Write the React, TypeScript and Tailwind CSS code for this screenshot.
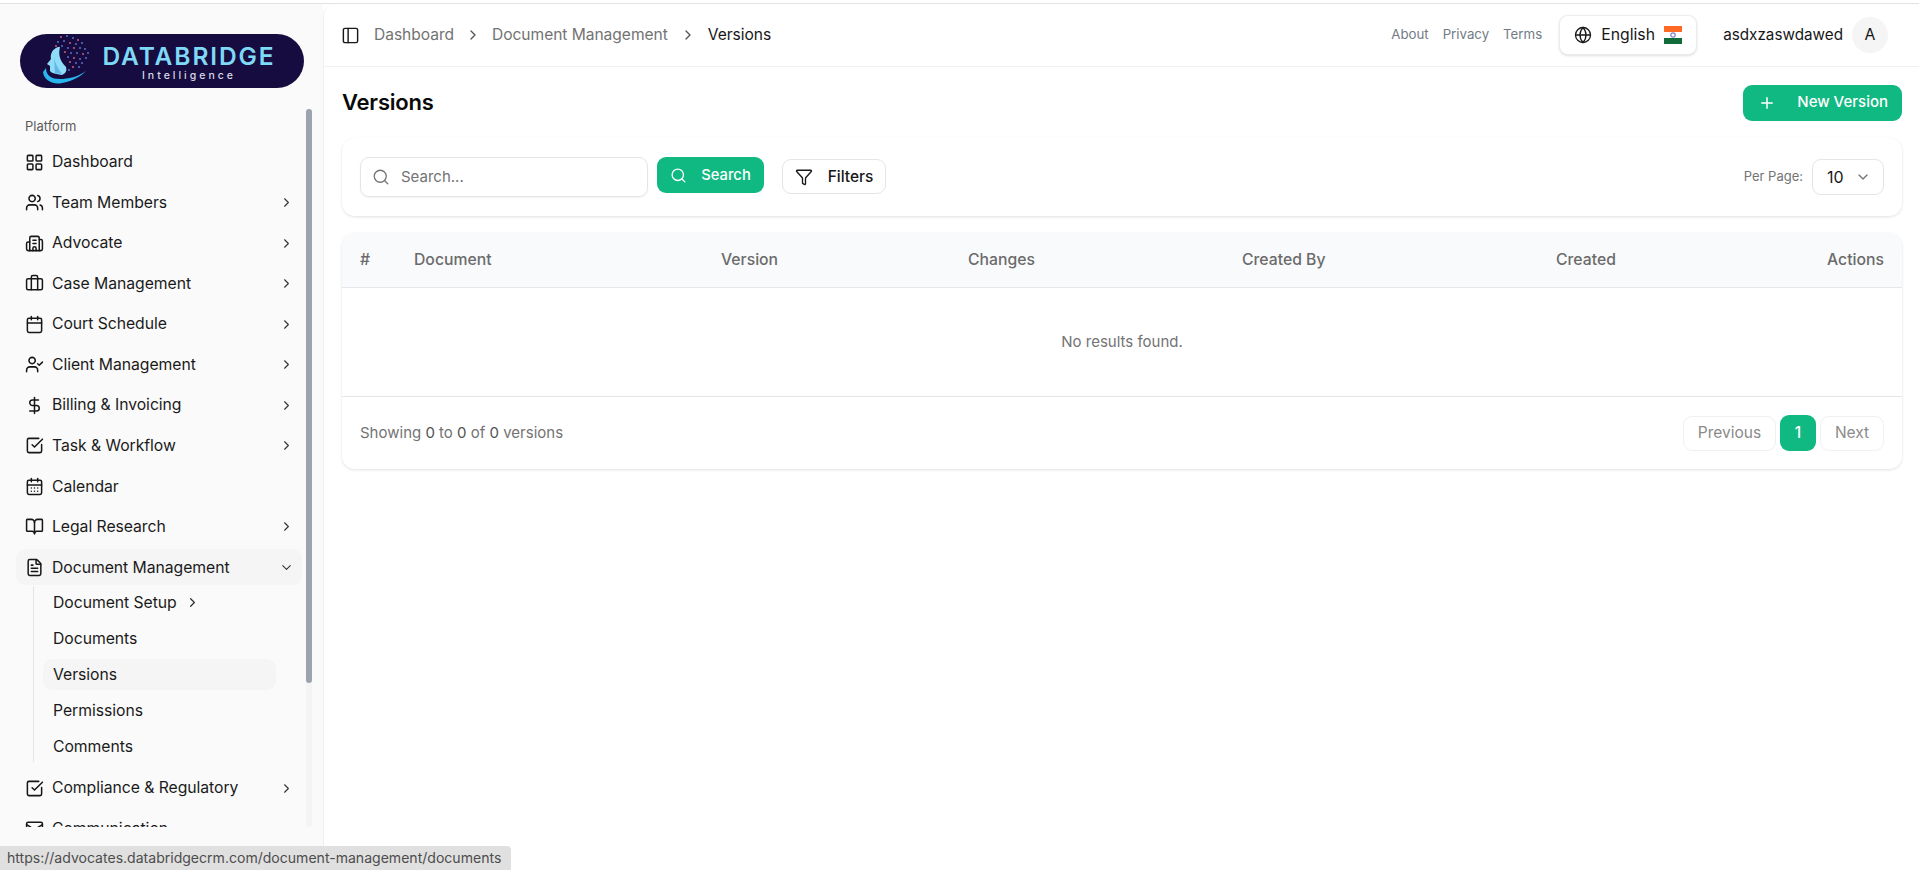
import React from "react";
import {
  LayoutGrid, Users, Building2, Briefcase, Calendar, UserCheck, DollarSign, SquareCheckBig, CalendarDays,
  BookOpen, FileText, Mail, ChevronRight, ChevronDown, PanelLeft, Globe, Search, Funnel, Plus,
} from "lucide-react";

const font = "font-['Inter','Liberation_Sans',sans-serif]";

type Item = { label: string; icon: React.ComponentType<{ className?: string; strokeWidth?: number }>; arrow?: boolean; open?: boolean };

const before: Item[] = [
  { label: "Dashboard", icon: LayoutGrid },
  { label: "Team Members", icon: Users, arrow: true },
  { label: "Advocate", icon: Building2, arrow: true },
  { label: "Case Management", icon: Briefcase, arrow: true },
  { label: "Court Schedule", icon: Calendar, arrow: true },
  { label: "Client Management", icon: UserCheck, arrow: true },
  { label: "Billing & Invoicing", icon: DollarSign, arrow: true },
  { label: "Task & Workflow", icon: SquareCheckBig, arrow: true },
  { label: "Calendar", icon: CalendarDays },
  { label: "Legal Research", icon: BookOpen, arrow: true },
  { label: "Document Management", icon: FileText, open: true },
];
const after: Item[] = [
  { label: "Compliance & Regulatory", icon: SquareCheckBig, arrow: true },
  { label: "Communication", icon: Mail },
];

function Row({ item }: { item: Item }) {
  const Icon = item.icon;
  return (
    <div className={`flex h-9 shrink-0 items-center gap-[8px] rounded-[9px] pl-[9px] pr-[8px] ${item.open ? "bg-[#f5f5f5]" : ""}`}>
      <Icon className="size-[19px] shrink-0 text-[#171717]" strokeWidth={1.9} />
      <span className="flex-1 whitespace-nowrap text-[15.75px] tracking-[-0.05px] text-[#1a1a1a]">{item.label}</span>
      {item.arrow && <ChevronRight className="size-[15px] text-[#333]" strokeWidth={1.8} />}
      {item.open && <ChevronDown className="size-[15px] text-[#333]" strokeWidth={1.8} />}
    </div>
  );
}

function Logo() {
  const dots = [
    [21, 2], [27, 1], [33, 3], [38, 5], [18, 7], [24, 6], [30, 8], [36, 9], [42, 8], [16, 11],
    [22, 11], [28, 13], [34, 13], [40, 13], [45, 14], [25, 17], [31, 18], [37, 18], [43, 19], [48, 18],
    [28, 22], [34, 23], [40, 24], [46, 23], [30, 27], [36, 28], [42, 28], [33, 32], [39, 32], [29, 35],
  ];
  return (
    <div className="flex h-[54px] w-[284px] items-center rounded-[27px] bg-[#160c40] pl-[20px]">
      <svg viewBox="0 0 58 52" className="h-[52px] w-[58px] shrink-0">
        {dots.map(([x, y], i) => (
          <circle key={i} cx={x} cy={y} r="0.9" fill={i % 3 === 0 ? "#e0648c" : "#5f7fd8"} />
        ))}
        <path d="M18 12 C12 14 10 20 11 24 L7 29 L10 31 L10 36 C12 39 18 39 22 40 C26 38 27 36 26 32 C20 26 18 20 20 12 Z" fill="#8fdcf8" />
        <path d="M14 20 C14 26 17 32 22 39 L15 38 Z" fill="#4aa6e0" opacity="0.7" />
        <path d="M3 37 C4 46 14 50 22 48 C32 46 40 42 46 36 C38 42 28 44 20 44 C12 44 6 41 6 33 Z" fill="#29b6ec" />
      </svg>
      <div className="ml-[2px] flex w-[178px] flex-col items-center pt-[4px]">
        <span className="whitespace-nowrap text-[24.5px] font-semibold leading-[25px] tracking-[1.9px] text-[#7fd8f6]">DATABRIDGE</span>
        <span className="text-[10.5px] font-medium leading-[13px] tracking-[3px] text-[#d9d9e6]">Intelligence</span>
      </div>
    </div>
  );
}

function Sidebar() {
  return (
    <aside className="relative flex w-[323px] shrink-0 flex-col bg-[#fafafa]">
      <div className="px-5 pt-[30px]"><Logo /></div>
      <div className="relative mt-[21px] h-[718px] w-[312px] overflow-hidden pl-4 pr-[10px]">
        <div className="flex h-[35px] items-center pl-[9px] pt-[1px] text-[13px] text-[#5a5a5a]">Platform</div>
        <div className="flex flex-col gap-[4.55px]">
          {before.map((i) => <Row key={i.label} item={i} />)}
          <div className="-mt-[4px] mb-[3.5px] ml-[17px] flex flex-col gap-[5px] border-l border-[#e5e5e5] pl-[9px] pr-[26px] pt-[1px]">
            <div className="flex h-[31px] items-center gap-[8px] px-[10px] text-[15.75px] tracking-[-0.05px] text-[#1a1a1a]">
              Document Setup <ChevronRight className="size-[15px] text-[#333]" />
            </div>
            {["Documents", "Versions", "Permissions", "Comments"].map((s) => (
              <div key={s} className={`flex h-[31px] items-center rounded-[9px] px-[10px] text-[15.75px] tracking-[-0.05px] text-[#1a1a1a] ${s === "Versions" ? "bg-[#f5f5f5]" : ""}`}>{s}</div>
            ))}
          </div>
          {after.map((i) => <Row key={i.label} item={i} />)}
        </div>
        <div className="absolute bottom-0 right-0 top-0 w-[6px] rounded-full bg-[#f4f4f5]">
          <div className="h-[574px] w-[6px] rounded-full bg-[#9ca3af]" />
        </div>
      </div>
    </aside>
  );
}

function Header() {
  return (
    <header className="flex h-[63px] items-center border-b border-[#f0f0f0] pl-[17px] pr-[31px]">
      <PanelLeft className="size-[19px] text-[#171717]" strokeWidth={1.8} />
      <nav className="ml-[14px] flex items-center text-[15.6px] tracking-[-0.05px] text-[#737373]">
        <span>Dashboard</span>
        <ChevronRight className="mx-[11px] size-[16px] text-[#555]" />
        <span>Document Management</span>
        <ChevronRight className="mx-[12px] size-[16px] text-[#555]" />
        <span className="text-[#171717]">Versions</span>
      </nav>
      <div className="ml-auto flex items-center gap-[14px] text-[13.25px] text-[#737b86]">
        <span>About</span><span>Privacy</span><span>Terms</span>
      </div>
      <div className="ml-[17px] flex h-[40px] w-[138px] items-center justify-center gap-[9px] rounded-[9px] border border-[#ececec] bg-white shadow-sm">
        <Globe className="size-[18px] text-[#171717]" strokeWidth={1.7} />
        <span className="text-[15.75px] text-[#171717]">English</span>
        <svg viewBox="0 0 18 18" className="h-[18px] w-[18px]">
          <rect y="0" width="18" height="6" fill="#ff6b26" />
          <rect y="6" width="18" height="6" fill="#fff" />
          <rect y="12" width="18" height="6" fill="#116a3a" />
          <circle cx="9" cy="9" r="2.2" fill="none" stroke="#7f7fc8" strokeWidth="1.2" />
        </svg>
      </div>
      <span className="ml-[26px] text-[15.25px] text-[#171717]">asdxzaswdawed</span>
      <div className="ml-[9px] flex size-9 items-center justify-center rounded-full bg-[#f5f5f5] text-[15.75px] text-[#171717]">A</div>
    </header>
  );
}

function Toolbar() {
  return (
    <div className="mt-[17px] flex h-[78px] items-center rounded-[13px] bg-white pl-[18px] pr-[18px] shadow-[0_1px_3px_rgba(0,0,0,0.12)]">
      <div className="flex h-[40px] w-[288px] items-center rounded-[9px] border border-[#e5e5e5] pl-[11px] shadow-[0_1px_2px_rgba(0,0,0,0.05)]">
        <Search className="size-[18px] text-[#737373]" strokeWidth={1.7} />
        <span className="ml-[11px] text-[15px] text-[#737373]">Search...</span>
      </div>
      <button className="ml-[9px] -mt-[4px] flex h-[36px] w-[107px] items-center justify-center gap-[14px] rounded-[9px] bg-[#10b981] text-[14.75px] font-medium text-white">
        <Search className="size-[17px]" strokeWidth={1.9} /> Search
      </button>
      <button className="ml-[18px] -mt-[1px] flex h-[35px] w-[104px] items-center justify-center gap-[15px] rounded-[9px] border border-[#e5e5e5] text-[15.5px] font-medium text-[#171717]">
        <Funnel className="size-[18px]" strokeWidth={1.8} /> Filters
      </button>
      <span className="ml-auto text-[13px] text-[#737373]">Per Page:</span>
      <div className="ml-[9px] flex h-[36px] w-[72px] items-center justify-between rounded-[9px] border border-[#e5e5e5] pl-[14px] pr-[12px]">
        <span className="text-[16px] text-[#171717]">10</span>
        <ChevronDown className="size-[16px] text-[#737373]" />
      </div>
    </div>
  );
}

function Table() {
  const cols = ["#", "Document", "Version", "Changes", "Created By", "Created"];
  return (
    <div className="mt-[17px] overflow-hidden rounded-[13px] bg-white shadow-[0_1px_3px_rgba(0,0,0,0.12)]">
      <div className="grid h-[55px] grid-cols-[54px_307px_247px_274px_314px_1fr_auto] items-center border-b border-[#e5e7eb] bg-[#f9fafb] px-[18px] text-[15.75px] font-medium text-[#6b6b6b]">
        {cols.map((c) => <span key={c}>{c}</span>)}
        <span>Actions</span>
      </div>
      <div className="flex h-[109px] items-center justify-center border-b border-[#e5e5e5] text-[15px] text-[#737373]">No results found.</div>
      <div className="flex h-[72px] items-center justify-between px-[18px]">
        <span className="text-[15px] text-[#737373]">Showing <span className="text-[#525252]">0</span> to <span className="text-[#525252]">0</span> of <span className="text-[#525252]">0</span> versions</span>
        <div className="flex items-center gap-[4px] text-[15.5px]">
          <span className="flex h-[35px] w-[93px] items-center justify-center rounded-[9px] border border-[#f0f0f0] text-[#8a8a8a]">Previous</span>
          <span className="flex h-[36px] w-[36px] items-center justify-center rounded-[9px] bg-[#10b981] font-medium text-white">1</span>
          <span className="flex h-[35px] w-[64px] items-center justify-center rounded-[9px] border border-[#f0f0f0] text-[#8a8a8a]">Next</span>
        </div>
      </div>
    </div>
  );
}

export default function App() {
  return (
    <div className={`${font} relative h-[870px] w-[1919px] overflow-hidden bg-white`}>
      <div className="h-[4px] border-b border-[#e2e2e2]" />
      <div className="flex h-[866px]">
        <Sidebar />
        <main className="flex-1 rounded-tl-[12px] border-l border-[#f0f0f0] bg-white">
          <Header />
          <div className="pl-[18px] pr-[17px] pt-[17px]">
            <div className="flex h-[37px] items-center justify-between">
              <h1 className="text-[22px] font-semibold tracking-[-0.2px] text-[#0a0a0a]">Versions</h1>
              <button className="flex h-[36px] w-[159px] items-center justify-between rounded-[9px] bg-[#10b981] pl-[15px] pr-[14px] text-[15px] font-medium text-white">
                <Plus className="size-[18px]" strokeWidth={2} /> New Version
              </button>
            </div>
            <Toolbar />
            <Table />
          </div>
        </main>
      </div>
      <div className="absolute bottom-0 left-0 flex h-[24px] w-[511px] items-center overflow-hidden whitespace-nowrap rounded-tr-[4px] bg-[#e0e0e0] pl-[7px] text-[14.05px] text-[#4d4d4d]">
        https://advocates.databridgecrm.com/document-management/documents
      </div>
    </div>
  );
}
